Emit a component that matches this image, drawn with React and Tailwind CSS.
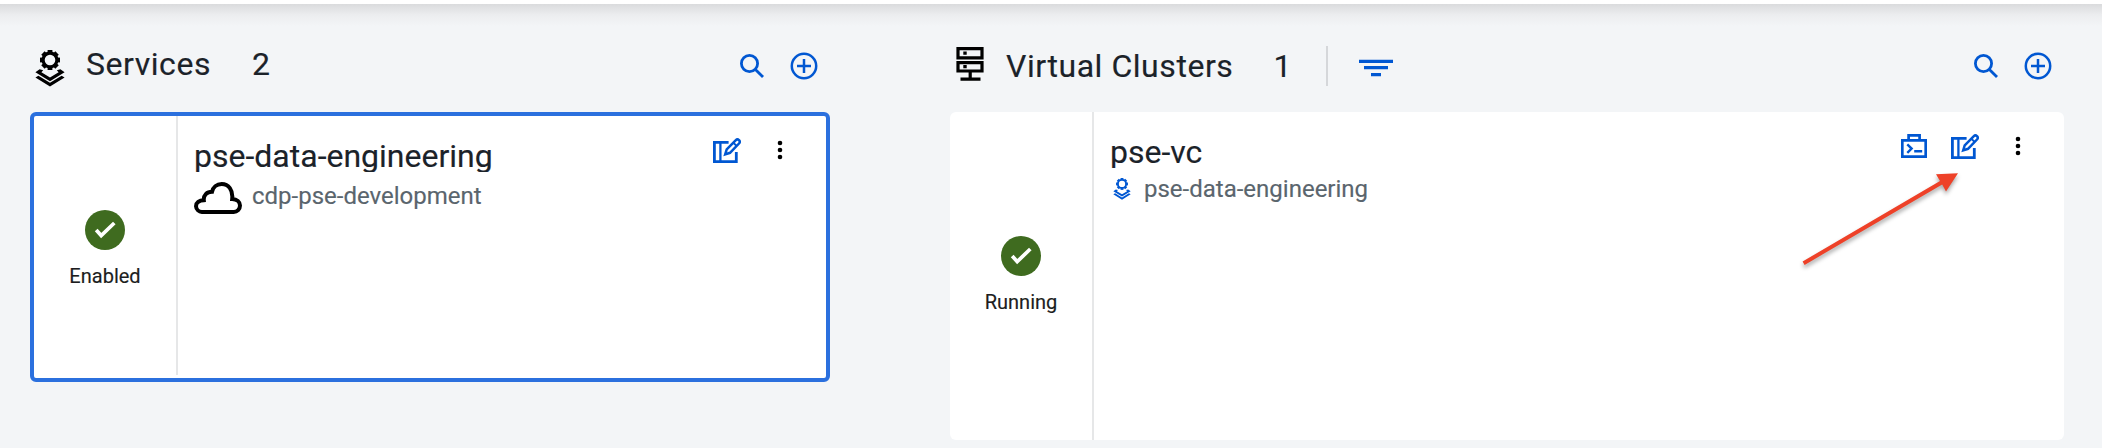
import React from "react";

const teeth = [0, 45, 90, 135, 180, 225, 270, 315];

function LayersIcon({ className }) {
  return (
    <svg viewBox="0 0 30 37" className={className} fill="currentColor">
      <circle cx="15" cy="10" r="6.9" fill="none" stroke="currentColor" strokeWidth="3.2" />
      {teeth.map((a) => (
        <rect key={a} x="12.6" y="0" width="4.8" height="3" transform={`rotate(${a} 15 10)`} />
      ))}
      <path d="M4.6 19.2L8.2 20.2L6.4 22.3L15 27.5L23.6 22.3L21.8 20.2L25.4 19.2L29.6 22.3L15 31.3L0.4 22.3Z" />
      <path d="M0.4 27.4L3.4 25.8L15 32.8L26.6 25.8L29.6 27.4L15 36.4Z" />
    </svg>
  );
}

function ServerIcon() {
  return (
    <svg viewBox="0 0 28 34" className="h-[34px] w-7 shrink-0" fill="none" stroke="black" strokeWidth="3.2">
      <path d="M2 1.6H26V10.8H2ZM2 15.6H26V24H2ZM14.2 24V32M4.5 32.2H24.5" />
      <path d="M7.3 6.2H10.7M7.3 19.6H10.7" />
    </svg>
  );
}

function SearchIcon() {
  return (
    <svg viewBox="0 0 24 24" className="size-6" fill="none" stroke="currentColor" strokeWidth="2.8">
      <circle cx="9.5" cy="9.5" r="8.1" />
      <path d="M15.4 15.4L23 23" />
    </svg>
  );
}

function PlusIcon() {
  return (
    <svg viewBox="0 0 28 28" className="size-7" fill="none" stroke="currentColor" strokeWidth="2.5">
      <circle cx="14" cy="14" r="12.2" />
      <path d="M14 7V21M7 14H21" />
    </svg>
  );
}

function FilterIcon() {
  return (
    <svg viewBox="0 0 34 18" className="mt-[3px] ml-[31px] h-[18px] w-[34px] text-[#0057d2]" fill="currentColor">
      <path d="M0 0.8H34V4H0ZM5 7H29V10.3H5ZM12 14H22V17.2H12Z" />
    </svg>
  );
}

function EditIcon() {
  return (
    <svg viewBox="0 0 28 25" className="h-[25px] w-7" fill="none" stroke="currentColor">
      <path d="M15.6 4.3H1.4V23.7H23.3V14" strokeWidth="2.8" />
      <path d="M7.4 4V24" strokeWidth="2.3" />
      <path d="M12.2 16.4L13.7 11.5L22.6 2.3Q24.4 0.6 26 2.1Q27.6 3.7 26 5.5L17 14.8Z" strokeWidth="2.5" />
      <path d="M20.2 4.6L23.7 8" strokeWidth="2" />
    </svg>
  );
}

function ToolboxIcon() {
  return (
    <svg viewBox="0 0 26 24" className="h-6 w-[26px]" fill="none" stroke="currentColor" strokeWidth="2.7">
      <path d="M1.3 6.3H24.7V22.7H1.3ZM7.6 6V1.3H18.6V6" />
      <path d="M6.3 10.4L10.6 14.6L6.3 18.8M13.2 17.3H21.2" strokeWidth="2.4" />
    </svg>
  );
}

function DotsIcon() {
  return (
    <svg viewBox="0 0 6 20" className="h-5 w-1.5" fill="black">
      <circle cx="3" cy="3" r="2.3" />
      <circle cx="3" cy="10" r="2.3" />
      <circle cx="3" cy="17" r="2.3" />
    </svg>
  );
}

function CloudIcon() {
  return (
    <svg viewBox="0 0 48 32" className="h-8 w-12 shrink-0" fill="none" stroke="black" strokeWidth="4">
      <path d="M8.3 30H39.7A6.4 6.4 0 0 0 46 23.6C46 19.8 43 17.2 38.2 17C39.2 8 34.5 2 27.7 2C22.6 2 19 5.2 18 9.8C12.8 9.8 9.4 13 9.8 18.2C5.2 18.4 2 20.6 2 24.2A6.1 6.1 0 0 0 8.3 30Z" />
    </svg>
  );
}

function Status({ label, className }) {
  return (
    <div className={`flex shrink-0 flex-col items-center border-r-2 border-[#e6e7e8] ${className}`}>
      <svg viewBox="0 0 40 40" className="size-10">
        <circle cx="20" cy="20" r="20" fill="#3f6b1f" />
        <path d="M11.2 20L16.2 25.6L29.3 13" fill="none" stroke="white" strokeWidth="3.7" />
      </svg>
      <span className="mt-3.5 text-[20px] leading-6 text-[#1c1d20]">{label}</span>
    </div>
  );
}

function HeaderActions({ className }) {
  return (
    <div className={`ml-auto flex items-center gap-[26px] text-[#0057d2] ${className}`}>
      <SearchIcon />
      <PlusIcon />
    </div>
  );
}

function Arrow() {
  return (
    <svg
      viewBox="0 0 170 110"
      className="absolute top-[165px] left-[1796px] h-[110px] w-[170px] drop-shadow-[0_3px_2px_rgba(0,0,0,0.35)]"
      fill="#ee4128"
    >
      <path d="M8.6 99.9L6.6 96.5L144 15.9L140 9.3L162 8.2L150 26.6L146.2 19.4Z" />
    </svg>
  );
}

export default function App() {
  return (
    <div className="relative h-[448px] w-[2102px] overflow-hidden bg-[#f3f5f7] font-[Roboto,sans-serif] text-[#1b2229] [-webkit-text-stroke:0.15px_currentColor]">
      <div className="h-1 bg-white" />
      <div className="h-[22px] bg-linear-to-b from-[#dadbdd] via-[#ecedef] to-[#f3f5f7]" />
      <main className="flex gap-[120px] pl-[30px]">
        <section className="w-[800px]">
          <header className="mb-1.5 flex h-20 items-center">
            <LayersIcon className="mt-1 ml-[5px] h-[37px] w-[30px] text-black" />
            <h2 className="-mt-1 ml-[21px] text-[32px] leading-10 tracking-[0.55px]">Services</h2>
            <span className="-mt-1 ml-[41px] text-[32px] leading-10">2</span>
            <HeaderActions className="mr-3" />
          </header>
          <article className="flex h-[270px] rounded-md border-4 border-[#2b70de] bg-white">
            <Status label="Enabled" className="mb-[3px] w-[144px] pt-[94px]" />
            <div className="pt-[19px] pl-4">
              <h3 className="h-[37px] overflow-hidden text-[32px] leading-[42px]">pse-data-engineering</h3>
              <div className="mt-[10px] flex">
                <CloudIcon />
                <span className="ml-2.5 text-[24px] leading-7 text-[#5a656d]">cdp-pse-development</span>
              </div>
            </div>
            <div className="mt-[22px] mr-[43px] ml-auto flex h-[25px] items-start gap-9 text-[#0057d2]">
              <EditIcon />
              <span className="mt-0.5"><DotsIcon /></span>
            </div>
          </article>
        </section>
        <section className="w-[1114px]">
          <header className="mb-1.5 flex h-20 items-center">
            <span className="-mt-1 ml-1.5"><ServerIcon /></span>
            <h2 className="ml-[22px] text-[32px] leading-10 tracking-[0.55px]">Virtual Clusters</h2>
            <span className="ml-[40px] text-[32px] leading-10">1</span>
            <span className="ml-[35px] h-10 w-0.5 bg-[#d5d7da]" />
            <FilterIcon />
            <HeaderActions className="mr-3" />
          </header>
          <article className="flex h-[328px] rounded-md bg-white">
            <Status label="Running" className="w-[144px] pt-[124px]" />
            <div className="pt-[19px] pl-4">
              <h3 className="h-[37px] overflow-hidden text-[32px] leading-[42px]">pse-vc</h3>
              <div className="mt-[7px] flex">
                <LayersIcon className="mt-[3px] ml-[3px] h-[22px] w-[18px] text-[#0057d2]" />
                <span className="ml-[13px] text-[24px] leading-7 text-[#5a656d]">pse-data-engineering</span>
              </div>
            </div>
            <div className="mt-[22px] mr-[43px] ml-auto flex h-[25px] items-start text-[#0057d2]">
              <ToolboxIcon />
              <span className="ml-6"><EditIcon /></span>
              <span className="mt-0.5 ml-9"><DotsIcon /></span>
            </div>
          </article>
        </section>
      </main>
      <Arrow />
    </div>
  );
}
